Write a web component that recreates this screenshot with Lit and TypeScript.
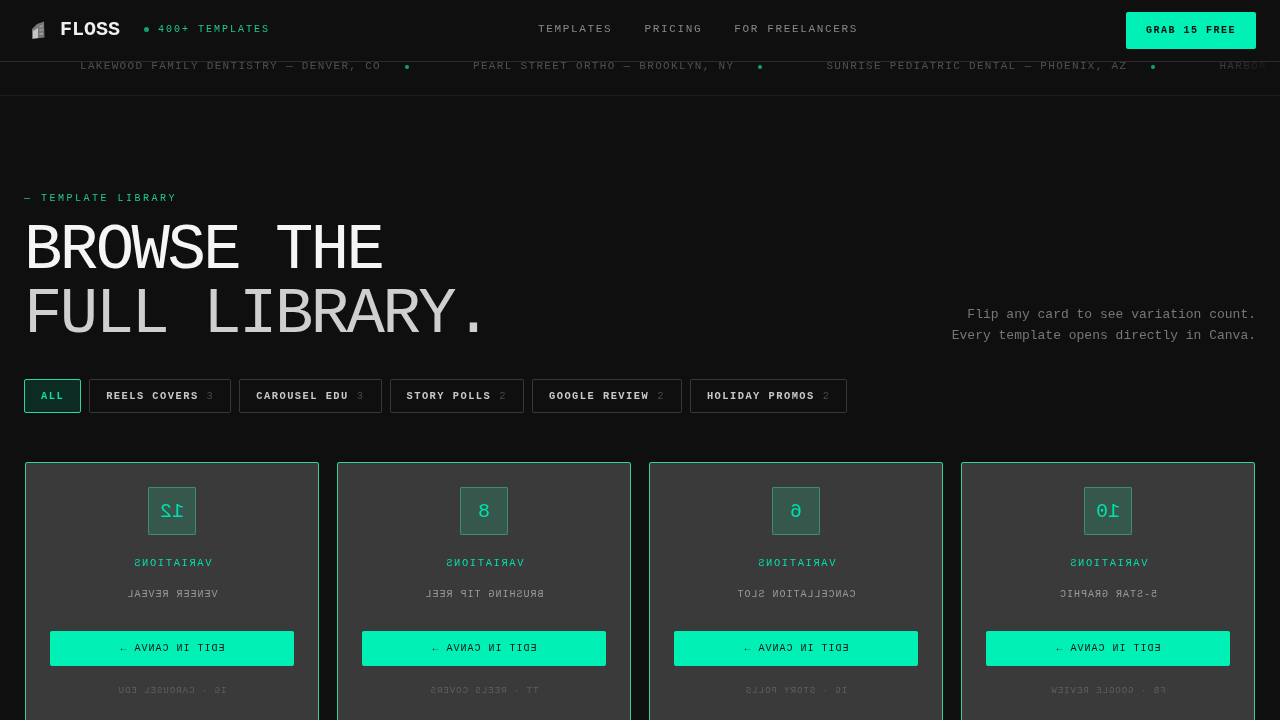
import { LitElement, html, css } from "lit";
import { customElement } from "lit/decorators.js";

const cards = [
  { n: "12", name: "VENEER REVEAL", meta: "IG · CAROUSEL EDU" },
  { n: "8", name: "BRUSHING TIP REEL", meta: "TT · REELS COVERS" },
  { n: "6", name: "CANCELLATION SLOT", meta: "IG · STORY POLLS" },
  { n: "10", name: "5-STAR GRAPHIC", meta: "FB · GOOGLE REVIEW" },
];
const filters = [
  ["REELS COVERS", 3],
  ["CAROUSEL EDU", 3],
  ["STORY POLLS", 2],
  ["GOOGLE REVIEW", 2],
  ["HOLIDAY PROMOS", 2],
];
const ticker = [
  "LAKEWOOD FAMILY DENTISTRY — DENVER, CO",
  "PEARL STREET ORTHO — BROOKLYN, NY",
  "SUNRISE PEDIATRIC DENTAL — PHOENIX, AZ",
  "HARBOR",
];

@customElement("app-root")
export class AppRoot extends LitElement {
  static styles = css`
    :host { display: block; width: 1280px; height: 720px; overflow: hidden; position: relative; background: #0f0f0f; font-family: "Liberation Mono", monospace; color: #f0f0f0; }
    * { box-sizing: border-box; }
    .nav { position: absolute; inset: 0 0 auto 0; height: 62px; display: flex; align-items: center; justify-content: space-between; padding: 0 24px; background: rgba(15,15,15,.92); border-bottom: 1px solid #2a2a2a; backdrop-filter: blur(2px); z-index: 2; }
    .brand { display: flex; align-items: center; padding-bottom: 2px; }
    .logo { width: 24px; height: 24px; margin-right: 12px; display: block; }
    .word { font-size: 20px; font-weight: 700; color: #f0f0f0; line-height: 1; }
    .tag { display: flex; align-items: center; margin-left: 24px; font-size: 10px; letter-spacing: 2px; color: #1fc795; }
    .dot { width: 5px; height: 5px; border-radius: 50%; background: #12a078; margin-right: 9px; }
    .links { display: flex; gap: 32px; font-size: 11px; letter-spacing: 1.65px; color: #888; padding-bottom: 3px; }
    .cta { width: 130px; height: 37px; background: #00f0b5; color: #0d0d0d; font-size: 10px; font-weight: 700; letter-spacing: 1.5px; display: flex; align-items: center; justify-content: center; border-radius: 2px; }
    .ticker { height: 96px; border-bottom: 1px solid #1c1c1c; }
    .track { padding: 60px 0 0 80px; height: 95px; display: flex; overflow: hidden; white-space: nowrap; font-size: 11px; letter-spacing: 1.32px; color: #505050; line-height: 13px; -webkit-mask-image: linear-gradient(90deg, transparent, #000 80px, #000 1200px, transparent); mask-image: linear-gradient(90deg, transparent, #000 80px, #000 1200px, transparent); }
    .tick { display: flex; align-items: center; height: 13px; }
    .tick i { width: 4px; height: 4px; border-radius: 50%; background: #12a078; margin: 0 64px 0 24px; }
    main { will-change: transform; }
    .hero { padding: 97px 24px 0; display: flex; justify-content: space-between; align-items: flex-end; }
    .eyebrow { font-size: 10px; letter-spacing: 2.5px; color: #1fc795; line-height: 12px; margin-bottom: 14px; }
    h1 { margin: 0; font-weight: 400; font-size: 64px; line-height: 64px; letter-spacing: -2.56px; color: #f5f5f5; white-space: pre; }
    h1 span { display: block; color: #cfcfcf; }
    .sub { text-align: right; font-size: 13px; line-height: 21px; color: #777; padding-bottom: 1px; }
    .filters { display: flex; gap: 8px; padding: 32px 24px 0; }
    .chip { height: 34px; padding: 0 16px; display: flex; align-items: center; gap: 8px; border: 1px solid #383838; border-radius: 2px; font-size: 10.4px; font-weight: 700; letter-spacing: 1.47px; color: #c8c8c8; }
    .chip b { font-weight: 400; color: #4a4a4a; }
    .chip.on { background: #0b2b23; border-color: #2bd6a8; color: #10dca6; }
    .grid { display: grid; grid-template-columns: repeat(4, 1fr); gap: 16px; padding: 48px 24px 0; }
    .cell { padding: 1px; }
    .card { height: 360px; border: 1px solid #35cfa6; border-radius: 2px; background: #3a3a3a; display: flex; flex-direction: column; align-items: center; padding: 24px 24px 0; transform: scaleX(-1); }
    .num { width: 48px; height: 48px; border: 1px solid #3f8a72; background: #35574c; color: #00e0a8; font-size: 20px; display: flex; align-items: center; justify-content: center; border-radius: 1px; }
    .var { margin-top: 22px; font-size: 10.4px; letter-spacing: 1.66px; color: #00e0a8; line-height: 12px; }
    .name { margin-top: 20px; font-size: 10px; letter-spacing: 1px; color: #9a9a9a; line-height: 12px; }
    .edit { margin-top: 30px; width: 100%; height: 35px; background: #00f0b5; color: #111; border-radius: 2px; font-size: 10px; letter-spacing: 1px; display: flex; align-items: center; justify-content: center; }
    .meta { margin-top: 20px; font-size: 9px; letter-spacing: 1px; color: #5f5f5f; line-height: 11px; white-space: pre; }
  `;

  render() {
    return html`
      <div class="ticker">
        <div class="track">
          ${ticker.map((t, i) => html`<div class="tick">${t}${i < 3 ? html`<i></i>` : ""}</div>`)}
        </div>
      </div>
      <header class="nav">
        <div class="brand">
          <svg class="logo" viewBox="0 0 24 24" aria-hidden="true">
            <path d="M8 11 L13 6 L20 3.5 L20.5 19.5 L8 21 Z" fill="#777"/>
            <path d="M9 13 L14 10 L14 20 L9 20.5 Z" fill="#c4c4c4"/>
            <path d="M15.5 9 L19 7.5 M15.5 12.5 L19 11.5 M15.5 16 L19 15.5" stroke="#a8a8a8" stroke-width="1.3"/>
          </svg>
          <span class="word">FLOSS</span>
          <span class="tag"><span class="dot"></span>400+ TEMPLATES</span>
        </div>
        <nav class="links"><span>TEMPLATES</span><span>PRICING</span><span>FOR FREELANCERS</span></nav>
        <div class="cta">GRAB 15 FREE</div>
      </header>
      <main>
        <section class="hero">
          <div>
            <div class="eyebrow">— TEMPLATE LIBRARY</div>
            <h1>BROWSE THE<span>FULL LIBRARY.</span></h1>
          </div>
          <div class="sub">Flip any card to see variation count.<br />Every template opens directly in Canva.</div>
        </section>
        <div class="filters">
          <div class="chip on">ALL</div>
          ${filters.map(([l, c]) => html`<div class="chip">${l}<b>${c}</b></div>`)}
        </div>
        <div class="grid">
          ${cards.map(
            (c) => html`<div class="cell"><article class="card">
              <div class="num">${c.n}</div>
              <div class="var">VARIATIONS</div>
              <div class="name">${c.name}</div>
              <div class="edit">EDIT IN CANVA →</div>
              <div class="meta">${c.meta}</div>
            </article></div>`
          )}
        </div>
      </main>
    `;
  }
}
